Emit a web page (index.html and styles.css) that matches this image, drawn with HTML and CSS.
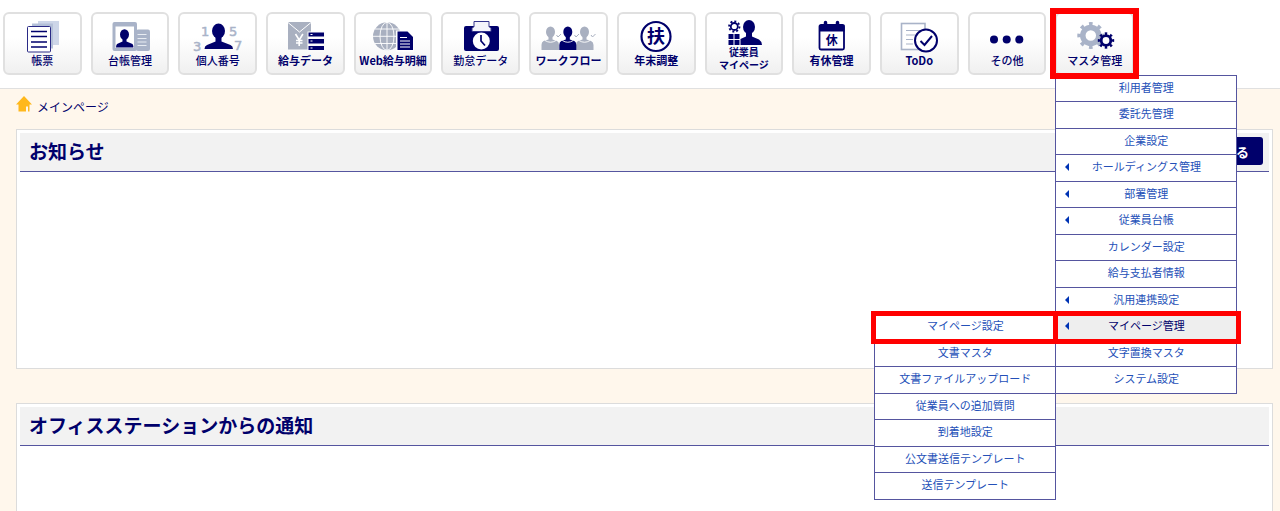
FILE: index.html
```
<!DOCTYPE html>
<html lang="ja">
<head>
<meta charset="UTF-8">
<meta name="viewport" content="width=device-width, initial-scale=1.0">
<title>メインページ</title>
<link rel="stylesheet" href="styles.css">
</head>
<body>

<header class="header">
  <nav class="nav" aria-label="メインメニュー">

    <div class="nav-item">
      <button class="nav-btn" type="button">
        <svg viewBox="0 0 60 36" aria-hidden="true">
          <path d="M26 4h21v24h-21z" fill="#cdd6e8"/>
          <path d="M20 6.500h21v25h-21z" fill="#b4c0d8"/>
          <rect x="15.500" y="9.500" width="23" height="25.500" rx="1" fill="#fff" stroke="#2a2a86"/>
          <path d="M19 14.500h16M19 19.500h16M19 25h16M19 30h16" stroke="#00006b" stroke-width="1.400"/>
        </svg>
        <span>帳票</span>
      </button>
    </div>

    <div class="nav-item">
      <button class="nav-btn" type="button">
        <svg viewBox="0 0 60 36" aria-hidden="true">
          <rect x="12.500" y="5" width="24.500" height="29" rx="2" fill="#a9b3c8"/>
          <rect x="36" y="12.500" width="14" height="21.500" rx="2" fill="#a9b3c8"/>
          <path d="M15.500 9.500h18.500v21.500h-18.500z" fill="#fff"/>
          <ellipse cx="24.500" cy="17.500" rx="4.500" ry="5.300" fill="#00006b"/>
          <path d="M22.500 21h4v3.500l6 2.500q1 1 1 3.500h-17.500q0-2.500 1-3.500l5.500-2.500z" fill="#00006b"/>
          <path d="M37.500 17.500h9M37.500 21.500h9M37.500 25h9M37.500 28.500h9" stroke="#e8ecf2" stroke-width="1.200"/>
        </svg>
        <span>台帳管理</span>
      </button>
    </div>

    <div class="nav-item">
      <button class="nav-btn" type="button">
        <svg viewBox="0 0 60 36" aria-hidden="true">
          <g class="digits"><text x="13" y="19">1</text><text x="41" y="19">5</text><text x="5" y="34">3</text><text x="46" y="33">7</text></g>
          <ellipse cx="30.500" cy="14" rx="6.500" ry="7.500" fill="#00006b"/>
          <path d="M27.500 19h6v5.500l9 3.500q2.500 1 2.500 4h-28.500q0-3 2.500-4l8.500-3.500z" fill="#00006b"/>
        </svg>
        <span>個人番号</span>
      </button>
    </div>

    <div class="nav-item">
      <button class="nav-btn nav-btn--bold" type="button">
        <svg viewBox="0 0 60 36" aria-hidden="true">
          <path d="M13 5h23v27.500h-23z" fill="#a9b0c0"/>
          <path d="M13 5.500l11.500 9.500 11.500-9.500" fill="none" stroke="#fff"/>
          <path d="M20.500 17l3.700 6 3.700-6M24.200 23v6M21 23.500h6.500M21 26h6.500" fill="none" stroke="#fff" stroke-width="1.600"/>
          <path d="M32.500 14.500h18v20h-18z" fill="#fafafa"/>
          <path d="M33.500 15.500h15.500v4h-15.500zM33.500 22h15.500v4.500h-15.500zM33.500 29h15.500v4h-15.500z" fill="#00006b"/>
          <path d="M35.500 17.500h2M35.500 24h2M35.500 31h2" stroke="#fff"/>
        </svg>
        <span>給与データ</span>
      </button>
    </div>

    <div class="nav-item">
      <button class="nav-btn nav-btn--bold" type="button">
        <svg viewBox="0 0 60 36" aria-hidden="true">
          <circle cx="24" cy="19.300" r="14" fill="#a9b0c0"/>
          <path d="M10 19.300h28M12 12h24M12 26.500h24M24 5v28" stroke="#fff" stroke-width=".9"/>
          <ellipse cx="24" cy="19.300" rx="7" ry="14" fill="none" stroke="#fff" stroke-width=".9"/>
          <path d="M33 13.500h12l6 6v15h-18z" fill="#fff"/>
          <path d="M34.500 14.500h10l5.500 5.500v13h-15.500z" fill="#00006b"/>
          <path d="M37 20.500h7M37 24h10M37 27h10M37 30h10" stroke="#fff" stroke-width="1.100"/>
        </svg>
        <span>Web給与明細</span>
      </button>
    </div>

    <div class="nav-item">
      <button class="nav-btn" type="button">
        <svg viewBox="0 0 60 36" aria-hidden="true">
          <path d="M15 9h31q2 0 2 2v21q0 2-2 2h-31q-2 0-2-2v-21q0-2 2-2z" fill="#00006b"/>
          <path d="M23 4.500h15v5l2 2v3h-19v-3l2-2z" fill="#f4f4fb" stroke="#34348c"/>
          <circle cx="30.300" cy="24" r="8.500" fill="#fff"/>
          <path d="M30 18v6l4 4.500" fill="none" stroke="#00006b" stroke-width="1.700"/>
        </svg>
        <span>勤怠データ</span>
      </button>
    </div>

    <div class="nav-item">
      <button class="nav-btn nav-btn--bold" type="button">
        <svg viewBox="0 0 60 36" aria-hidden="true">
          <g fill="#a9b0c0">
            <ellipse cx="12.500" cy="15" rx="4.500" ry="5.500"/>
            <path d="M10.500 19h4v3.500l4.500 1.500q2 1 2 4v5h-17.500v-5q0-3 2-4l5-1.500z"/>
            <ellipse cx="46.500" cy="15" rx="4.500" ry="5.500"/>
            <path d="M44.500 19h4v3.500l4.500 1.500q2.500 1 2.500 4v5h-17.500v-5q0-3 2-4l4.500-1.500z"/>
          </g>
          <path d="M18.500 18l1.500 2 3-3M36.500 18l1.500 2 3-3M53 18l1.500 2 3-3" fill="none" stroke="#a9b0c0"/>
          <ellipse cx="29.800" cy="15" rx="4.500" ry="5.500" fill="#00006b"/>
          <path d="M27.800 19h4v3.500l4.500 1.500q2 1 2 4v5h-17v-5q0-3 2-4l4.500-1.500z" fill="#00006b"/>
          <path d="M7 23.500q5.500 3.500 11 0M24.300 23.500q5.500 3.500 11 0M41 23.500q5.500 3.500 11 0" fill="none" stroke="#fff" stroke-width=".9"/>
        </svg>
        <span>ワークフロー</span>
      </button>
    </div>

    <div class="nav-item">
      <button class="nav-btn nav-btn--bold" type="button">
        <svg viewBox="0 0 60 36" aria-hidden="true">
          <circle cx="30" cy="19.500" r="14.500" fill="#fff" stroke="#00006b" stroke-width="2.200"/>
          <text class="mark mark--lg" x="30" y="26">扶</text>
        </svg>
        <span>年末調整</span>
      </button>
    </div>

    <div class="nav-item">
      <button class="nav-btn nav-btn--bold nav-btn--two" type="button">
        <svg viewBox="0 0 60 28" aria-hidden="true">
          <circle cx="20.300" cy="9.500" r="3.500" fill="none" stroke="#00006b" stroke-width="1.800"/>
          <circle cx="20.300" cy="9.500" r="5.200" fill="none" stroke="#00006b" stroke-width="1.800" pathLength="16" stroke-dasharray="1"/>
          <path d="M14.500 17h5v5h-5zM20.500 17h5v5h-5zM14.500 23h5v5h-5zM20.500 23h5v5h-5z" fill="#00006b"/>
          <ellipse cx="35" cy="10" rx="6" ry="7" fill="#00006b"/>
          <path d="M32 15h6v4.500l7 3q2.500 1.500 3 5.500h-21.500v-6l5.500-2.500z" fill="#00006b"/>
        </svg>
        <span>従業員<br>マイページ</span>
      </button>
    </div>

    <div class="nav-item">
      <button class="nav-btn nav-btn--bold" type="button">
        <svg viewBox="0 0 60 36" aria-hidden="true">
          <rect x="17.500" y="8" width="24.500" height="24.500" rx="1.500" fill="#fff" stroke="#00006b" stroke-width="1.800"/>
          <path d="M17 8h25.500v6.500h-25.500z" fill="#00006b"/>
          <path d="M23.500 5.500v4M35.500 5.500v4" stroke="#00006b" stroke-width="3.500" stroke-linecap="round"/>
          <text class="mark" x="29.700" y="28">休</text>
        </svg>
        <span>有休管理</span>
      </button>
    </div>

    <div class="nav-item">
      <button class="nav-btn nav-btn--bold" type="button">
        <svg viewBox="0 0 60 36" aria-hidden="true">
          <rect x="12.500" y="6.500" width="23.500" height="26" fill="#fff" stroke="#a9b3c8" stroke-width="1.600"/>
          <path d="M17 13.500h14M17 18h9M17 22.500h7M17 27h7" stroke="#a9b3c8" stroke-width="1.200"/>
          <circle cx="37" cy="23.500" r="11" fill="#fff" stroke="#00006b" stroke-width="2"/>
          <path d="M31.500 24l4 4 7.500-9" fill="none" stroke="#00006b" stroke-width="2"/>
        </svg>
        <span>ToDo</span>
      </button>
    </div>

    <div class="nav-item">
      <button class="nav-btn" type="button">
        <svg viewBox="0 0 60 36" aria-hidden="true">
          <g fill="#00006b"><circle cx="17" cy="22.500" r="4"/><circle cx="29.700" cy="22.500" r="4"/><circle cx="42.300" cy="22.500" r="4"/></g>
        </svg>
        <span>その他</span>
      </button>
    </div>

    <div class="nav-item">
      <button class="nav-btn nav-btn--marked" type="button" aria-expanded="true">
        <svg viewBox="0 0 60 36" aria-hidden="true">
          <g fill="none" stroke="#a9b3c8">
            <circle cx="25.800" cy="18.500" r="8" stroke-width="5.500"/>
            <circle cx="25.800" cy="18.500" r="11.700" stroke-width="3.600" pathLength="160" stroke-dasharray="8 12" stroke-dashoffset="4"/>
          </g>
          <g fill="none" stroke="#00006b">
            <circle cx="41" cy="23.500" r="4.800" stroke-width="2.800"/>
            <circle cx="41" cy="23.500" r="6.900" stroke-width="2.600" pathLength="160" stroke-dasharray="9 11" stroke-dashoffset="4.500"/>
          </g>
        </svg>
        <span>マスタ管理</span>
      </button>

      <ul class="menu">
        <li><a href="#">利用者管理</a></li>
        <li><a href="#">委託先管理</a></li>
        <li><a href="#">企業設定</a></li>
        <li class="has-sub"><a href="#">ホールディングス管理</a></li>
        <li class="has-sub"><a href="#">部署管理</a></li>
        <li class="has-sub"><a href="#">従業員台帳</a></li>
        <li><a href="#">カレンダー設定</a></li>
        <li><a href="#">給与支払者情報</a></li>
        <li class="has-sub"><a href="#">汎用連携設定</a></li>
        <li class="has-sub active">
          <a class="marked" href="#">マイページ管理</a>
          <ul class="menu menu--sub">
            <li><a class="marked" href="#">マイページ設定</a></li>
            <li><a href="#">文書マスタ</a></li>
            <li><a href="#">文書ファイルアップロード</a></li>
            <li><a href="#">従業員への追加質問</a></li>
            <li><a href="#">到着地設定</a></li>
            <li><a href="#">公文書送信テンプレート</a></li>
            <li><a href="#">送信テンプレート</a></li>
          </ul>
        </li>
        <li><a href="#">文字置換マスタ</a></li>
        <li><a href="#">システム設定</a></li>
      </ul>
    </div>

  </nav>
</header>

<main class="main">
  <p class="crumb">
    <svg viewBox="0 0 16 16" aria-hidden="true"><path d="M8 0l8 8.500h-2.500v7h-1.500v-5h-2v5h-7.500v-7h-2.500z" fill="#ffb81c"/></svg>
    メインページ
  </p>

  <section class="panel">
    <div class="panel-head">
      <h2>お知らせ</h2>
      <button class="more" type="button">る</button>
    </div>
  </section>

  <section class="panel panel--last">
    <div class="panel-head">
      <h2>オフィスステーションからの通知</h2>
    </div>
  </section>
</main>

</body>
</html>
```
FILE: styles.css
```
:root {
  --navy: #00006b;
  --link: #2450b8;
  --line: #55559f;
  --red: #ff0000;
  --cream: #fff7ec;
  --gray: #f2f2f2;
}
* { margin: 0; padding: 0; box-sizing: border-box; }
body {
  display: flex;
  flex-direction: column;
  height: 100vh;
  overflow: hidden;
  background: var(--cream);
  color: var(--navy);
  font-family: "Noto Sans CJK JP", sans-serif;
  font-size: 11px;
}
ul { list-style: none; }

/* ---------- header ---------- */
.header {
  background: #fff;
  border-bottom: 1px solid #e0e0e0;
  padding: 12px 3px 13px;
}
.nav {
  display: grid;
  grid-template-columns: repeat(13, 1fr);
  gap: 9px;
  max-width: 1131px;
}
.nav-item { position: relative; }
.nav-btn {
  position: relative;
  display: flex;
  flex-direction: column;
  align-items: center;
  width: 100%;
  height: 63px;
  padding-top: 3px;
  border: 2px solid #e0e0e0;
  border-radius: 6px;
  background: linear-gradient(#fff 40%, #f0f0f0);
  color: var(--navy);
  font: 500 11px/14px "Noto Sans CJK JP", sans-serif;
  white-space: nowrap;
}
.nav-btn svg { display: block; flex: none; width: 60px; overflow: visible; }
.nav-btn--bold { font-weight: 700; }
.nav-btn--two { font-size: 10px; line-height: 13px; }

/* icon text */
.digits { font: 13px "DejaVu Sans", sans-serif; fill: #a9b3c8; stroke: #a9b3c8; stroke-width: .5; }
.mark { font: 700 12px "Noto Sans CJK JP", sans-serif; fill: var(--navy); text-anchor: middle; }
.mark--lg { font-size: 18px; }

/* ---------- red frames ---------- */
.nav-btn--marked::after,
.marked::after {
  content: "";
  position: absolute;
  z-index: 3;
  inset: -6px -7px;
  border: 6px solid var(--red);
  pointer-events: none;
}
.nav-btn--marked { z-index: 3; }
.menu .marked::after { inset: -3px -5px -4px -3px; border-width: 5px; }

/* ---------- dropdown ---------- */
.menu {
  position: absolute;
  z-index: 2;
  top: 63px;
  left: 0;
  width: 182px;
  border: solid var(--line);
  border-width: 0 1px 1px;
  background: #fff;
}
.menu li {
  position: relative;
  height: 26px;
  border-top: 1px solid var(--line);
}
.menu li:nth-child(even) { height: 27px; }
.menu a {
  position: relative;
  display: block;
  height: 100%;
  color: var(--link);
  line-height: 22px;
  text-align: center;
  text-decoration: none;
}
.menu .has-sub::before {
  content: "";
  position: absolute;
  z-index: 1;
  top: 8px;
  left: 9px;
  border: solid transparent;
  border-width: 4px 4px 4px 0;
  border-right-color: #0033b4;
}
.menu .active > a { background: #eee; color: var(--navy); }
.menu--sub { top: -1px; right: 100%; left: auto; }
.menu--sub li:nth-child(odd) { height: 27px; }
.menu--sub li:nth-child(even) { height: 26px; }
.menu--sub .marked::after { inset: -3px -3px -4px -4px; }

/* ---------- main ---------- */
.main {
  display: flex;
  flex: 1;
  flex-direction: column;
  padding: 7px 7px 0 16px;
}
.crumb {
  display: flex;
  align-items: center;
  gap: 5px;
  height: 20px;
  margin-bottom: 13px;
  font-size: 12px;
}
.crumb svg { width: 16px; height: 16px; margin-bottom: 4px; }
.panel {
  min-height: 240px;
  margin-bottom: 34px;
  padding: 3px;
  border: 1px solid #dcdcdc;
  background: #fff;
}
.panel--last { flex: 1; min-height: 0; margin-bottom: 0; border-bottom: 0; }
.panel-head {
  display: flex;
  align-items: center;
  justify-content: space-between;
  height: 39px;
  padding: 0 6px 2px 9px;
  border-bottom: 1px solid var(--line);
  background: var(--gray);
}
.panel-head h2 { font-size: 19px; line-height: 36px; }
.more {
  width: 110px;
  height: 28px;
  padding-right: 14px;
  border: 0;
  border-radius: 3px;
  background: var(--navy);
  color: #fff;
  font: 700 13px "Noto Sans CJK JP", sans-serif;
  text-align: right;
}
```
